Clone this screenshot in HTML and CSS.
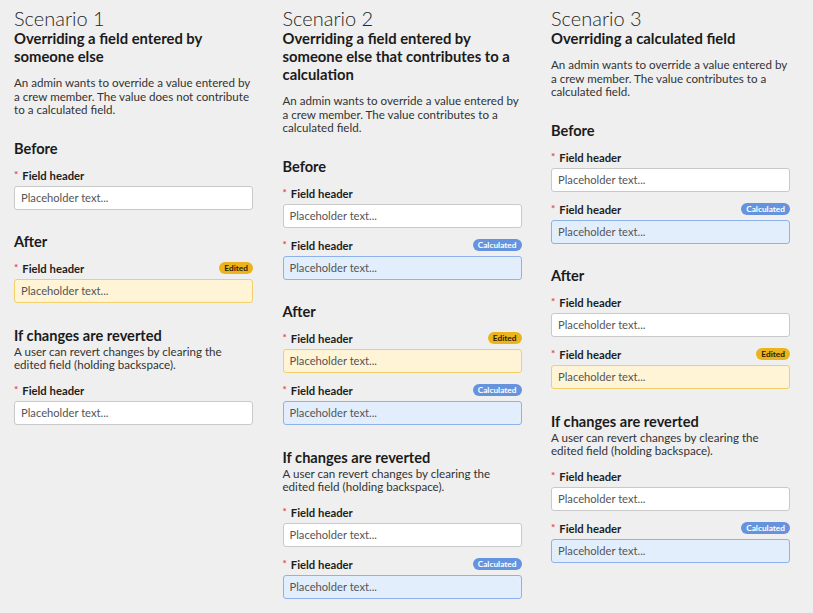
FILE: index.html
```html
<!DOCTYPE html>
<html lang="en">
<head>
<meta charset="utf-8">
<title>Scenarios</title>
<link rel="stylesheet" href="styles.css">
</head>
<body>
<main class="board">
  <section class="scenario">
    <h1 class="title">Scenario 1</h1>
    <h2 class="subtitle">Overriding a field entered by someone else</h2>
    <p class="desc">An admin wants to override a value entered by a crew member. The value does not contribute to a calculated field.</p>
    <div class="block">
      <h3 class="heading">Before</h3>
      <div class="field">
        <div class="label-row"><span class="label"><span class="req">*</span>Field header</span></div>
        <div class="control">Placeholder text...</div>
      </div>
    </div>
    <div class="block">
      <h3 class="heading">After</h3>
      <div class="field">
        <div class="label-row"><span class="label"><span class="req">*</span>Field header</span><span class="badge badge-edited">Edited</span></div>
        <div class="control control-edited">Placeholder text...</div>
      </div>
    </div>
    <div class="block block-revert">
      <h3 class="heading heading-tight">If changes are reverted</h3>
      <p class="desc desc-revert">A user can revert changes by clearing the edited field (holding backspace).</p>
      <div class="field">
        <div class="label-row"><span class="label"><span class="req">*</span>Field header</span></div>
        <div class="control">Placeholder text...</div>
      </div>
    </div>
  </section>

  <section class="scenario">
    <h1 class="title">Scenario 2</h1>
    <h2 class="subtitle">Overriding a field entered by someone else that contributes to a calculation</h2>
    <p class="desc">An admin wants to override a value entered by a crew member. The value contributes to a calculated field.</p>
    <div class="block">
      <h3 class="heading">Before</h3>
      <div class="field">
        <div class="label-row"><span class="label"><span class="req">*</span>Field header</span></div>
        <div class="control">Placeholder text...</div>
      </div>
      <div class="field">
        <div class="label-row"><span class="label"><span class="req">*</span>Field header</span><span class="badge badge-calc">Calculated</span></div>
        <div class="control control-calc">Placeholder text...</div>
      </div>
    </div>
    <div class="block">
      <h3 class="heading">After</h3>
      <div class="field">
        <div class="label-row"><span class="label"><span class="req">*</span>Field header</span><span class="badge badge-edited">Edited</span></div>
        <div class="control control-edited">Placeholder text...</div>
      </div>
      <div class="field">
        <div class="label-row"><span class="label"><span class="req">*</span>Field header</span><span class="badge badge-calc">Calculated</span></div>
        <div class="control control-calc">Placeholder text...</div>
      </div>
    </div>
    <div class="block block-revert">
      <h3 class="heading heading-tight">If changes are reverted</h3>
      <p class="desc desc-revert">A user can revert changes by clearing the edited field (holding backspace).</p>
      <div class="field">
        <div class="label-row"><span class="label"><span class="req">*</span>Field header</span></div>
        <div class="control">Placeholder text...</div>
      </div>
      <div class="field">
        <div class="label-row"><span class="label"><span class="req">*</span>Field header</span><span class="badge badge-calc">Calculated</span></div>
        <div class="control control-calc">Placeholder text...</div>
      </div>
    </div>
  </section>

  <section class="scenario">
    <h1 class="title">Scenario 3</h1>
    <h2 class="subtitle">Overriding a calculated field</h2>
    <p class="desc">An admin wants to override a value entered by a crew member. The value contributes to a calculated field.</p>
    <div class="block">
      <h3 class="heading">Before</h3>
      <div class="field">
        <div class="label-row"><span class="label"><span class="req">*</span>Field header</span></div>
        <div class="control">Placeholder text...</div>
      </div>
      <div class="field">
        <div class="label-row"><span class="label"><span class="req">*</span>Field header</span><span class="badge badge-calc">Calculated</span></div>
        <div class="control control-calc">Placeholder text...</div>
      </div>
    </div>
    <div class="block">
      <h3 class="heading">After</h3>
      <div class="field">
        <div class="label-row"><span class="label"><span class="req">*</span>Field header</span></div>
        <div class="control">Placeholder text...</div>
      </div>
      <div class="field">
        <div class="label-row"><span class="label"><span class="req">*</span>Field header</span><span class="badge badge-edited">Edited</span></div>
        <div class="control control-edited">Placeholder text...</div>
      </div>
    </div>
    <div class="block block-revert">
      <h3 class="heading heading-tight">If changes are reverted</h3>
      <p class="desc desc-revert">A user can revert changes by clearing the edited field (holding backspace).</p>
      <div class="field">
        <div class="label-row"><span class="label"><span class="req">*</span>Field header</span></div>
        <div class="control">Placeholder text...</div>
      </div>
      <div class="field">
        <div class="label-row"><span class="label"><span class="req">*</span>Field header</span><span class="badge badge-calc">Calculated</span></div>
        <div class="control control-calc">Placeholder text...</div>
      </div>
    </div>
  </section>
</main>
</body>
</html>
```

FILE: styles.css
```css
* { box-sizing: border-box; }

html, body {
  margin: 0;
  background: #efefef;
}

body {
  font-family: "Lato", "Liberation Sans", sans-serif;
  color: #1d1d1d;
}

.board {
  display: grid;
  grid-template-columns: repeat(3, 239px);
  column-gap: 29.5px;
  align-items: start;
  padding: 7px 14px;
}

.title {
  margin: 0;
  font-size: 20px;
  line-height: 22px;
  font-weight: 300;
  color: #262626;
}

.subtitle {
  margin: 0;
  font-size: 14.8px;
  line-height: 18px;
  font-weight: 700;
  color: #1b1b1b;
}

.desc {
  margin: 11px 0 0;
  font-size: 11.6px;
  line-height: 13.5px;
  color: #333;
}

.block {
  margin-top: 23px;
}

.block-revert {
  margin-top: 24px;
}

.heading {
  margin: 0 0 11px;
  font-size: 14.6px;
  line-height: 18px;
  font-weight: 700;
  color: #1b1b1b;
}

.heading-tight {
  margin-bottom: 0;
}

.desc-revert {
  margin: 0 0 12px;
  max-width: 226px;
}

.field + .field {
  margin-top: 11px;
}

.label-row {
  display: flex;
  justify-content: space-between;
  align-items: center;
  height: 13px;
  margin-bottom: 4px;
}

.label {
  display: flex;
  align-items: flex-start;
  font-size: 11.3px;
  font-weight: 700;
  color: #1d1d1d;
}

.req {
  color: #e0484d;
  margin-right: 4px;
  font-size: 10px;
  line-height: 10px;
  font-weight: 700;
}

.control {
  height: 24px;
  display: flex;
  align-items: center;
  padding: 0 6px;
  background: #fff;
  border: 1px solid #c9c9c9;
  border-radius: 3px;
  font-size: 11.2px;
  color: #555;
}

.control-edited {
  background: #fff4d5;
  border-color: #f2cf6a;
}

.control-calc {
  background: #e3eefc;
  border-color: #8db1ea;
}

.badge {
  height: 12px;
  line-height: 12px;
  padding: 0 5px;
  border-radius: 6px;
  font-size: 8.3px;
  font-weight: 700;
}

.badge-edited {
  background: #ebb41c;
  color: #2b2100;
}

.badge-calc {
  background: #6593dd;
  color: #fff;
}
```
